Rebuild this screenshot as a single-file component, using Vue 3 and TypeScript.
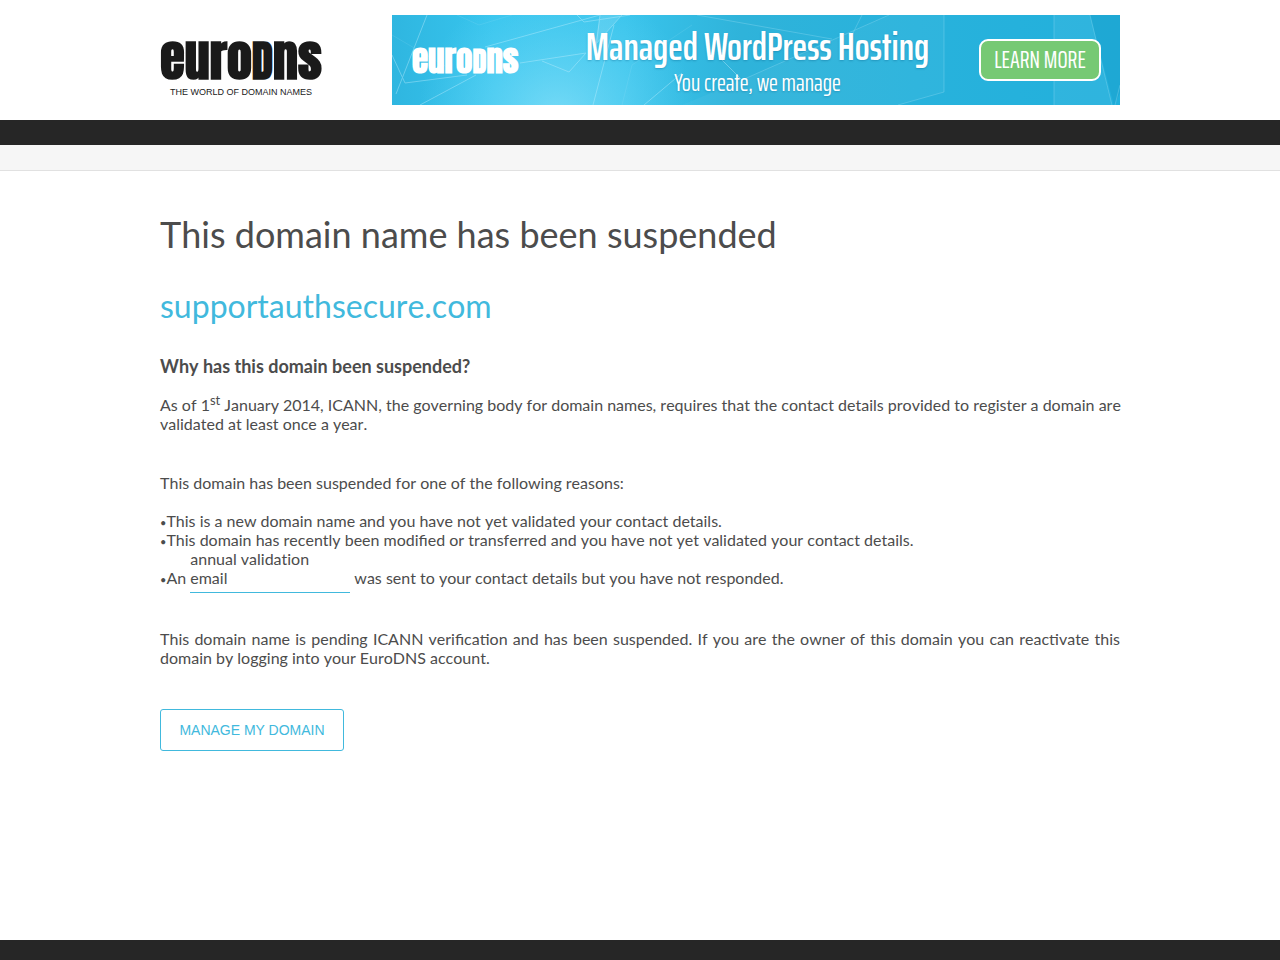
<script setup lang="ts">
const domain: string = 'supportauthsecure.com'
const reasons: string[] = [
  'This is a new domain name and you have not yet validated your contact details.',
  'This domain has recently been modified or transferred and you have not yet validated your contact details.',
]
</script>

<template>
  <div class="page">
    <header class="wrap header">
      <a class="brand" href="#" aria-label="EuroDNS home">
        <span class="wordmark">euro<span class="cap">D</span>ns</span>
        <span class="tagline">THE WORLD OF DOMAIN NAMES</span>
      </a>
      <section class="banner">
        <svg class="art" viewBox="0 0 728 90" preserveAspectRatio="none" aria-hidden="true">
          <defs>
            <linearGradient id="base" x1="0" x2="1" y1="0" y2="0">
              <stop offset="0" stop-color="#2fb6e0" />
              <stop offset=".14" stop-color="#37c5ee" />
              <stop offset=".32" stop-color="#39c4ec" />
              <stop offset=".48" stop-color="#2fb3da" />
              <stop offset=".72" stop-color="#28b2dc" />
              <stop offset="1" stop-color="#22b0dc" />
            </linearGradient>
            <radialGradient id="glow" gradientUnits="userSpaceOnUse" cx="165" cy="105" r="140">
              <stop offset="0" stop-color="#8ce2fa" stop-opacity=".75" />
              <stop offset="1" stop-color="#6dd8f6" stop-opacity="0" />
            </radialGradient>
          </defs>
          <rect width="728" height="90" fill="url(#base)" />
          <rect width="728" height="90" fill="url(#glow)" />
          <path d="M350 65L497 0H552V77L506 90H290Z" fill="#fff" opacity=".04" />
          <path d="M662 0H698L720 90H662Z" fill="#fff" opacity=".06" />
          <path d="M698 0H728V78L722 90Z" fill="#1794c4" opacity=".3" />
          <path d="M208 0H230L203 30Z" fill="#fff" opacity=".12" />
          <g fill="none" stroke="#c4f0ff" stroke-width="1" opacity=".4">
            <path d="M35 0L4 79M0 40L13 68L75 60M128 48L194 38L177 57L150 46M28 90L84 60M93 32L208 0M230 0L203 30M208 0L203 40M222 10L201 90M185 0L192 7L238 0M252 90L290 58M330 45L350 65" />
            <path d="M305 0L440 24M350 65L497 0M552 0V77L506 90M470 0L460 20M662 0V90M698 0L720 90M728 70L723 90" opacity=".6" />
            <path d="M65 0L87 10L120 0M0 20L60 55M230 90L240 50L300 10" opacity=".3" />
          </g>
        </svg>
        <span class="banner-logo">euro<span class="cap">D</span>ns</span>
        <div class="pitch">
          <strong>Managed WordPress Hosting</strong>
          <span>You create, we manage</span>
        </div>
        <a class="learn" href="#">LEARN MORE</a>
      </section>
    </header>
    <div class="bar"></div>
    <div class="subbar"></div>
    <main class="wrap content">
      <h1>This domain name has been suspended</h1>
      <h2>{{ domain }}</h2>
      <h3>Why has this domain been suspended?</h3>
      <p class="since">
        As of 1<sup>st</sup> January 2014, ICANN, the governing body for domain names, requires that the contact details provided to register a domain are validated at least once a year.
      </p>
      <p class="intro">This domain has been suspended for one of the following reasons:</p>
      <ul>
        <li v-for="reason in reasons" :key="reason">{{ reason }}</li>
        <li>An <a class="email" href="#">annual validation email</a> was sent to your contact details but you have not responded.</li>
      </ul>
      <p class="pending">
        This domain name is pending ICANN verification and has been suspended. If you are the owner of this domain you can reactivate this domain by logging into your EuroDNS account.
      </p>
      <a class="manage" href="#">MANAGE MY DOMAIN</a>
    </main>
    <footer class="footer"></footer>
  </div>
</template>

<style>
body {
  margin: 0;
  background: #fff;
}
</style>

<style scoped>
.page {
  display: flex;
  flex-direction: column;
  min-height: 100vh;
  color: #4c4c4c;
  font: 16px/19px Lato, sans-serif;
}
.wrap {
  box-sizing: border-box;
  width: 100%;
  max-width: 960px;
  margin: 0 auto;
}
.header {
  display: flex;
  justify-content: space-between;
  align-items: center;
  gap: 24px;
  min-height: 120px;
}
.brand {
  display: flex;
  flex-direction: column;
  align-items: center;
  gap: 4px;
  width: 162px;
  padding-top: 14px;
  color: #1a1a1a;
  text-decoration: none;
}
.wordmark,
.banner-logo {
  font-family: Impact, Anton, "Roboto Condensed", Roboto, sans-serif;
  font-weight: 900;
  white-space: nowrap;
}
.wordmark {
  font-size: 50px;
  line-height: 42px;
}
.cap {
  font-size: 86%;
}
.tagline {
  font: 9px/12px "Liberation Sans", Arial, sans-serif;
  white-space: nowrap;
}
.banner {
  position: relative;
  display: grid;
  grid-template-columns: 108px 1fr 122px;
  align-items: center;
  box-sizing: border-box;
  width: 728px;
  min-height: 90px;
  padding: 0 19px 0 20px;
  color: #fff;
  font-family: "Saira Extra Condensed", "Saira ExtraCondensed", "Saira Condensed", "Roboto Condensed", sans-serif;
}
.art {
  position: absolute;
  inset: 0;
  width: 100%;
  height: 100%;
}
.banner-logo,
.pitch,
.learn {
  position: relative;
}
.banner-logo {
  font-size: 33px;
}
.pitch {
  display: flex;
  flex-direction: column;
  align-items: center;
  padding: 6px 0 0 16px;
  text-shadow: 0 1px 2px rgb(0 80 120 / 30%);
  white-space: nowrap;
}
.pitch strong {
  font-size: 39px;
  font-weight: 600;
  line-height: 40px;
}
.pitch span {
  font-size: 24px;
  line-height: 32px;
}
.learn {
  box-sizing: border-box;
  width: 122px;
  border: 2px solid #fff;
  border-radius: 9px;
  background: #76c974;
  color: #fff;
  font-size: 24px;
  line-height: 38px;
  text-align: center;
  text-decoration: none;
  white-space: nowrap;
}
.bar {
  height: 25px;
  background: #262626;
}
.subbar {
  height: 25px;
  border-bottom: 1px solid #e1e1e1;
  background: #f6f6f6;
}
.content {
  flex: 1;
  padding: 40px 0;
  font-kerning: none;
}
h1,
h2,
h3,
p,
ul {
  margin: 0;
}
h1 {
  font-size: 36px;
  font-weight: 400;
  line-height: 46px;
}
h2 {
  margin-top: 29px;
  color: #41b9dd;
  font-size: 32px;
  font-weight: 400;
  line-height: 40px;
}
h3 {
  margin-top: 29px;
  font-size: 18px;
  line-height: 22px;
}
.since {
  margin: 18px -4px 0 0;
}
sup {
  font-size: 13px;
  line-height: 0;
}
.intro {
  margin-top: 40px;
}
ul {
  margin-top: 19px;
  padding: 0;
  list-style: none;
}
li::before {
  content: "•";
  font-size: 11px;
  line-height: 0;
}
.email {
  display: inline-block;
  width: 160px;
  padding-bottom: 5px;
  border-bottom: 1px solid #41b9dd;
  color: inherit;
  font-variant-ligatures: none;
  text-decoration: none;
}
.pending {
  margin-top: 36px;
  text-align: justify;
}
.manage {
  display: inline-block;
  box-sizing: border-box;
  min-width: 184px;
  margin-top: 42px;
  padding: 0 18px;
  border: 1px solid #41b9dd;
  border-radius: 3px;
  color: #41b9dd;
  font: 14px/40px "Liberation Sans", Arial, sans-serif;
  text-align: center;
  text-decoration: none;
}
.footer {
  height: 20px;
  background: #262626;
}
</style>
